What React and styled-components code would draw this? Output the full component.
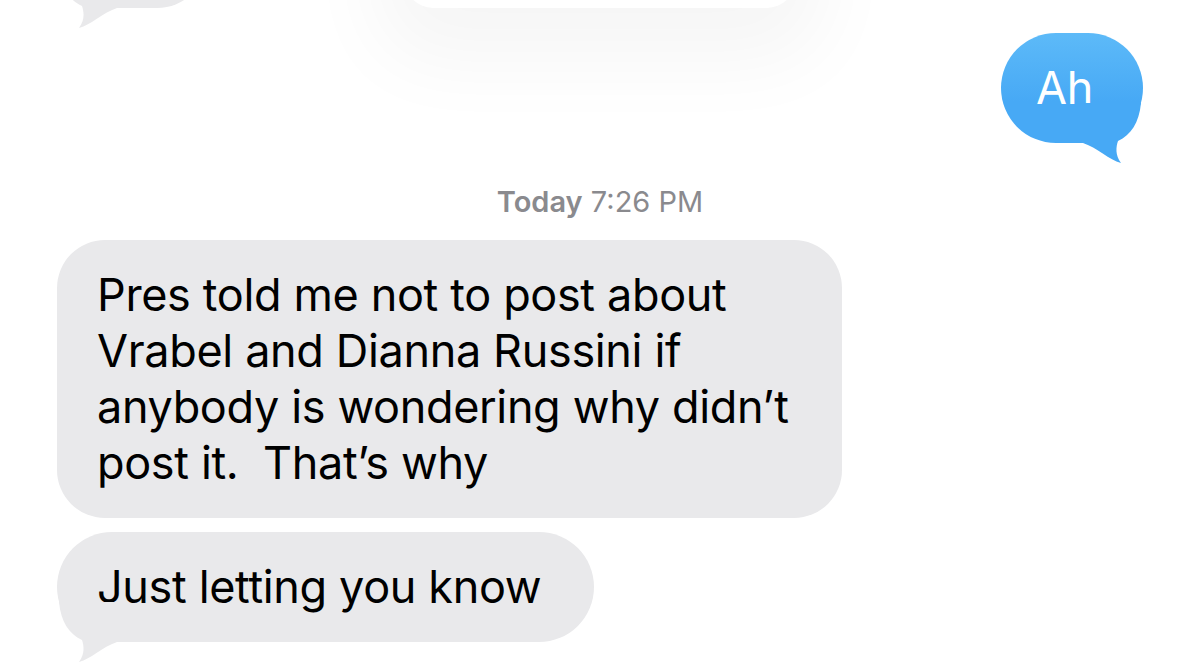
import styled, { createGlobalStyle } from 'styled-components';

const GlobalStyle = createGlobalStyle`
    html, body {
        margin: 0;
        padding: 0;
        background: #fff;
        overflow: hidden;
    }
    body {
        font-family: Inter, "Noto Sans", "Liberation Sans", sans-serif;
        -webkit-font-smoothing: antialiased;
    }
`;

const Thread = styled.div`
    display: flex;
    flex-direction: column;
    width: 1200px;
    height: 663px;
    padding: 0 57px;
    box-sizing: border-box;
    overflow: hidden;
`;

// bubbles that were cut off by the top edge of the screenshot
const TopRow = styled.div`
    display: grid;
    grid-template-columns: 1fr 390px 1fr;
    align-items: end;
    margin-top: -94px;
    height: 100px;
`;

const PreviewCard = styled.div`
    height: 102px;
    align-self: start;
    background: #fff;
    border-radius: 0 0 28px 28px;
    box-shadow: 0 24px 80px 30px rgba(0, 0, 0, 0.04);
`;

const Row = styled.div`
    display: flex;
    justify-content: ${p => (p.$sent ? 'flex-end' : 'flex-start')};
    margin-top: ${p => p.$gap}px;
`;

const Bubble = styled.div`
    position: relative;
    box-sizing: border-box;
    min-height: 110px;
    padding: ${p => (p.$sent ? '27px 50px 27px 35px' : '27px 53px 27px 40px')};
    border-radius: ${p => p.$radius || 55}px;
    background: ${p => (p.$sent ? 'linear-gradient(180deg, #5dbaf8 0%, #47a9f5 62%, #47a9f5 100%)' : '#e9e9eb')};
    color: ${p => (p.$sent ? '#fff' : '#000')};
    font-size: 45px;
    line-height: 56px;
    letter-spacing: -0.35px;
    white-space: pre;
`;

const Stub = styled(Bubble)`
    width: 150px;
    height: 100px;
    min-height: 0;
    padding: 0;
`;

const Tail = styled.svg`
    position: absolute;
    bottom: -22px;
    ${p => (p.$sent ? 'right: 0; transform: scaleX(-1);' : 'left: 0;')}
    width: 70px;
    height: 62px;
    overflow: visible;
`;

const Stamp = styled.div`
    margin-top: 42px;
    text-align: center;
    font-size: 29px;
    line-height: 34px;
    color: #8a8a8e;

    > b {
        font-weight: 600;
    }
`;

const BubbleTail = ({ sent, color }) => (
    <Tail $sent={sent} viewBox="0 0 70 62">
        <path
            d="M2 0 C4 20 12 32 25 38 C27 44 28 52 22 60 C34 57 45 45 60 40 L60 0 Z"
            fill={color}
        />
    </Tail>
);

const App = () => {
    return (
        <>
            <GlobalStyle />
            <Thread>
                <TopRow>
                    <Stub>
                        <BubbleTail color="#e9e9eb" />
                    </Stub>
                    <PreviewCard />
                </TopRow>

                <Row $sent $gap={27}>
                    <Bubble $sent>
                        Ah
                        <BubbleTail sent color="#47a9f5" />
                    </Bubble>
                </Row>

                <Stamp><b>Today</b> 7:26 PM</Stamp>

                <Row $gap={21}>
                    <Bubble $radius={48}>
                        {'Pres told me not to post about\nVrabel and Dianna Russini if\nanybody is wondering why didn\u2019t\npost it.  That\u2019s why'}
                    </Bubble>
                </Row>

                <Row $gap={14}>
                    <Bubble>
                        Just letting you know
                        <BubbleTail color="#e9e9eb" />
                    </Bubble>
                </Row>
            </Thread>
        </>
    );
};

export default App;
